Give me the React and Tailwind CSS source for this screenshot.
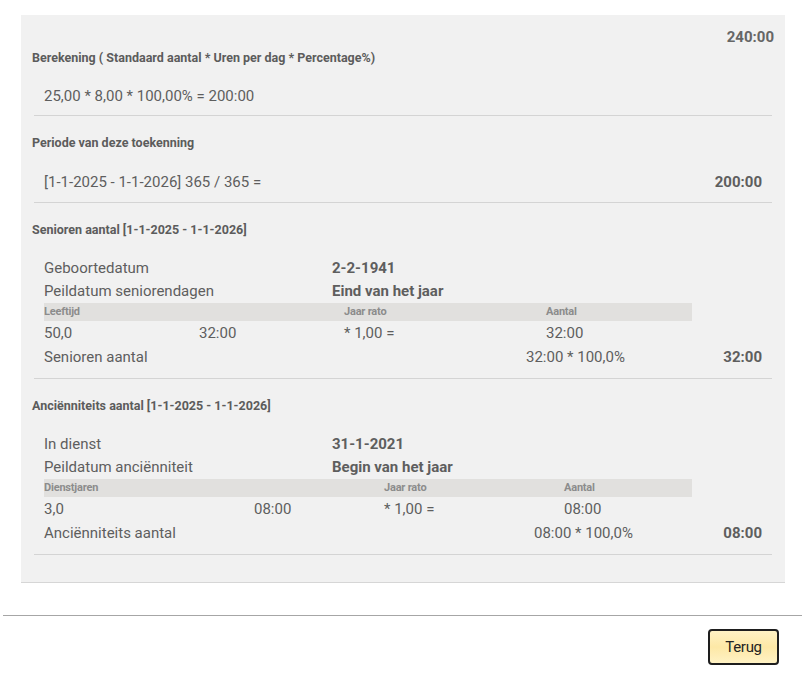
const font = { fontFamily: 'Roboto, "Liberation Sans", sans-serif' };

const SectionHeader = ({ children }) => (
  <div className="h-[18px] mt-[18px] flex items-center text-[12.5px] font-bold text-[#5c5c5c]">
    {children}
  </div>
);

const Row = ({ label, value }) => (
  <div className="h-[23px] flex items-center">
    <span className="w-[288px]">{label}</span>
    <span className="font-bold">{value}</span>
  </div>
);

const CalcTable = ({ cols, row, total }) => (
  <>
    <div className="h-[18px] w-[648px] bg-[#e1e0de] flex items-center text-[11px] font-bold tracking-[-0.2px] text-[#8c8c8c]">
      <span style={{ width: cols[0] }}>{cols[1]}</span>
      <span style={{ width: cols[2] }}>{cols[3]}</span>
      <span>Aantal</span>
    </div>
    <div className="h-[24px] flex items-center">
      <span style={{ width: row[0] }}>{row[1]}</span>
      <span style={{ width: row[2] }}>{row[3]}</span>
      <span style={{ width: cols[2] }}>{row[4]}</span>
      <span>{row[5]}</span>
    </div>
    <div className="h-[24px] flex items-center">
      <span style={{ width: total[0] }}>{total[1]}</span>
      <span className="flex-1">{total[2]}</span>
      <span className="font-bold">{total[3]}</span>
    </div>
  </>
);

export default function App() {
  return (
    <div className="w-[805px] h-[681px] bg-white text-[15px] text-[#5e5e5e]" style={font}>
      <div className="mt-[15px] ml-[21px] mr-[20px] bg-[#f1f1f1] border-b border-[#d6d6d6] px-[11px] pt-[13px] pb-[27px]">
        <div className="h-[18px] flex items-center justify-end text-[15px] font-bold text-[#666]">240:00</div>

        {/* Berekening */}
        <div className="h-[18px] mt-[3px] flex items-center text-[12.5px] font-bold text-[#5c5c5c]">
          Berekening ( Standaard aantal * Uren per dag * Percentage%)
        </div>
        <div className="mx-[2px] px-[10px] pt-[17px] pb-[7px] border-b border-[#d4d4d4]">
          <div className="h-[24px] flex items-center">25,00 * 8,00 * 100,00% = 200:00</div>
        </div>

        {/* Periode */}
        <SectionHeader>Periode van deze toekenning</SectionHeader>
        <div className="mx-[2px] px-[10px] pt-[18px] pb-[8px] border-b border-[#d4d4d4]">
          <div className="h-[24px] flex items-center justify-between">
            <span>[1-1-2025 - 1-1-2026] 365 / 365 =</span>
            <span className="font-bold">200:00</span>
          </div>
        </div>

        {/* Senioren */}
        <SectionHeader>Senioren aantal [1-1-2025 - 1-1-2026]</SectionHeader>
        <div className="mx-[2px] px-[10px] pt-[18px] pb-[9px] border-b border-[#d4d4d4]">
          <Row label="Geboortedatum" value="2-2-1941" />
          <Row label="Peildatum seniorendagen" value="Eind van het jaar" />
          <CalcTable
            cols={[300, 'Leeftijd', 202, 'Jaar rato']}
            row={[155, '50,0', 145, '32:00', '* 1,00 =', '32:00']}
            total={[482, 'Senioren aantal', '32:00 * 100,0%', '32:00']}
          />
        </div>

        {/* Anciënniteit */}
        <SectionHeader>Anciënniteits aantal [1-1-2025 - 1-1-2026]</SectionHeader>
        <div className="mx-[2px] px-[10px] pt-[18px] pb-[9px] border-b border-[#d4d4d4]">
          <Row label="In dienst" value="31-1-2021" />
          <Row label="Peildatum anciënniteit" value="Begin van het jaar" />
          <CalcTable
            cols={[340, 'Dienstjaren', 180, 'Jaar rato']}
            row={[210, '3,0', 130, '08:00', '* 1,00 =', '08:00']}
            total={[490, 'Anciënniteits aantal', '08:00 * 100,0%', '08:00']}
          />
        </div>
      </div>

      <div className="mt-[32px] ml-[3px] mr-[3px] border-t border-[#a6a6a6]" />

      <div className="flex justify-end pr-[26px] pt-[13px]">
        <button className="w-[71px] h-[36px] rounded-[4px] border-2 border-[#1e1e1e] bg-gradient-to-b from-[#fff2c4] via-[#fde8a6] to-[#fff2c4] text-[15px] text-[#222] tracking-[-0.3px]">
          Terug
        </button>
      </div>
    </div>
  );
}
